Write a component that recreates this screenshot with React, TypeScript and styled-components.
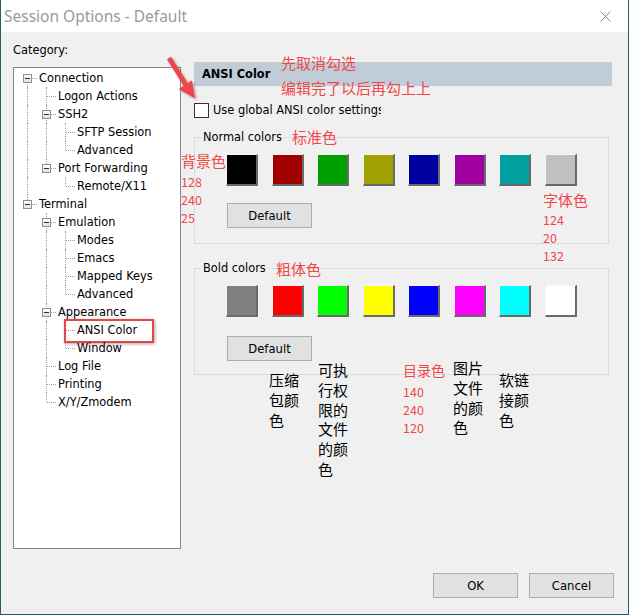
import React from 'react';
import styled, { createGlobalStyle, css } from 'styled-components';

const GlobalStyle = createGlobalStyle`
  html, body { margin: 0; padding: 0; background: #f0f0f0; }
  body { font-family: "DejaVu Sans", "Noto Sans", sans-serif; font-size: 11.4px; color: #000; }
  * { box-sizing: border-box; }
`;

const Window = styled.div`
  position: relative;
  width: 629px;
  height: 615px;
  background: #f0f0f0;
  border: 1px solid #2b5b64;
  border-top: none;
  display: flex;
  flex-direction: column;
  overflow: hidden;
`;

const TitleBar = styled.div`
  height: 32px;
  flex-shrink: 0;
  background: #fff;
  display: flex;
  align-items: center;
  justify-content: space-between;
  padding: 0 17px 0 3px;
`;

const TitleText = styled.span`
  font-family: "Noto Sans", "Open Sans", sans-serif;
  font-size: 15.5px;
  color: #9a9a9a;
`;

const Body = styled.div`
  display: grid;
  grid-template-columns: 168px 418px;
  column-gap: 13px;
  padding: 11px 0 0 12px;
`;

const LeftColumn = styled.div`
  display: flex;
  flex-direction: column;
`;

const CategoryLabel = styled.div`
  height: 14px;
  line-height: 14px;
  margin-bottom: 10px;
`;

const TreeBox = styled.div`
  height: 482px;
  background: #fff;
  border: 1px solid #828790;
  padding: 1px 0 0 4px;
  overflow: hidden;
`;

const TreeRow = styled.div`
  display: flex;
  height: 18px;
  align-items: flex-start;
`;

const Guide = styled.span<{ $line: boolean }>`
  position: relative;
  width: 19px;
  height: 18px;
  flex-shrink: 0;
  ${p => p.$line && css`
    &::before {
      content: '';
      position: absolute;
      left: 9px;
      top: 0;
      bottom: 0;
      border-left: 1px dotted #a0a0a0;
    }
  `}
`;

const Connector = styled.span<{ $top: boolean; $bottom: boolean }>`
  position: relative;
  width: 19px;
  height: 18px;
  flex-shrink: 0;
  &::before {
    content: '';
    position: absolute;
    left: 9px;
    top: ${p => (p.$top ? 0 : 9)}px;
    bottom: ${p => (p.$bottom ? 0 : 9)}px;
    border-left: 1px dotted #a0a0a0;
  }
  &::after {
    content: '';
    position: absolute;
    left: 10px;
    right: 0;
    top: 9px;
    border-top: 1px dotted #a0a0a0;
  }
`;

const ExpandBox = styled.span`
  position: absolute;
  left: 5px;
  top: 5px;
  width: 9px;
  height: 9px;
  z-index: 1;
  border: 1px solid #8e8f8f;
  background: linear-gradient(#ffffff, #dfe3e8);
  &::after {
    content: '';
    position: absolute;
    left: 1px;
    top: 3px;
    width: 5px;
    height: 1px;
    background: #1e2f4d;
  }
`;

const TreeLabel = styled.span<{ $marked?: boolean }>`
  position: relative;
  display: block;
  margin-left: 2px;
  line-height: 18px;
  height: 18px;
  white-space: nowrap;
  ${p => p.$marked && css`
    &::before {
      content: '';
      position: absolute;
      left: -13px;
      top: -2px;
      width: 86px;
      height: 20px;
      border: 2px solid #e64646;
      box-shadow: 1px 1px 3px rgba(0, 0, 0, 0.35);
    }
  `}
`;

const RightColumn = styled.div`
  display: flex;
  flex-direction: column;
`;

const PageHeader = styled.div`
  margin-top: 19px;
  height: 24px;
  line-height: 24px;
  background: #c0cdd9;
  padding-left: 8px;
  font-weight: bold;
`;

const CheckRow = styled.div`
  margin-top: 16px;
  width: 187px;
  height: 16px;
  display: flex;
  align-items: center;
  gap: 4px;
  overflow: hidden;
  white-space: nowrap;
`;

const CheckBox = styled.span`
  width: 15px;
  height: 15px;
  flex-shrink: 0;
  background: #fff;
  border: 1px solid #333;
`;

const GroupBox = styled.div<{ $top: number; $bottom: number }>`
  position: relative;
  width: 415px;
  margin-top: ${p => p.$top}px;
  border: 1px solid #dcdcdc;
  padding: 16px 0 ${p => p.$bottom}px 31px;
`;

const GroupTitle = styled.span`
  position: absolute;
  top: -8px;
  left: 6px;
  padding: 0 2px;
  line-height: 14px;
  background: #f0f0f0;
`;

const SwatchRow = styled.div`
  display: flex;
  gap: 13.5px;
`;

const Swatch = styled.span<{ $color: string }>`
  width: 32px;
  height: 32px;
  flex-shrink: 0;
  background: ${p => p.$color};
  border-style: solid;
  border-width: 1px 2px 2px 1px;
  border-color: #f4f4f4 #6a6a6a #6a6a6a #f4f4f4;
`;

const PushButton = styled.button<{ $gap?: number }>`
  display: block;
  width: 85px;
  height: 25px;
  margin: ${p => p.$gap ?? 0}px 0 0 ${p => (p.$gap ? 1 : 0)}px;
  padding: 0;
  background: #e1e1e1;
  border: 1px solid #adadad;
  font-family: "DejaVu Sans", sans-serif;
  font-size: 11.6px;
  color: #000;
`;

const Footer = styled.div`
  display: flex;
  justify-content: flex-end;
  gap: 11px;
  padding: 24px 14px 16px 0;
`;

const Note = styled.span<{ $x: number; $y: number; $size?: number }>`
  position: absolute;
  left: ${p => p.$x - 1}px;
  top: ${p => p.$y}px;
  font-family: "Noto Sans CJK SC", sans-serif;
  font-size: ${p => p.$size ?? 15}px;
  line-height: ${p => p.$size ?? 15}px;
  color: #f04848;
  white-space: nowrap;
`;

const NoteNumbers = styled.span<{ $x: number; $y: number }>`
  position: absolute;
  left: ${p => p.$x - 1}px;
  top: ${p => p.$y}px;
  font-family: "Noto Sans CJK SC", sans-serif;
  font-size: 12.5px;
  line-height: 18px;
  color: #f04848;
  white-space: pre-line;
`;

const BlackNote = styled.span<{ $x: number; $y: number }>`
  position: absolute;
  left: ${p => p.$x - 1}px;
  top: ${p => p.$y}px;
  font-family: "Noto Sans CJK SC", sans-serif;
  font-size: 15px;
  line-height: 19.8px;
  color: #000;
  white-space: pre-line;
`;

const ArrowSvg = styled.svg`
  position: absolute;
  left: 159px;
  top: 50px;
  overflow: visible;
`;

type Node = { label: string; children?: Node[]; marked?: boolean };

const tree: Node[] = [
  {
    label: 'Connection',
    children: [
      { label: 'Logon Actions' },
      { label: 'SSH2', children: [{ label: 'SFTP Session' }, { label: 'Advanced' }] },
      { label: 'Port Forwarding', children: [{ label: 'Remote/X11' }] },
    ],
  },
  {
    label: 'Terminal',
    children: [
      {
        label: 'Emulation',
        children: [{ label: 'Modes' }, { label: 'Emacs' }, { label: 'Mapped Keys' }, { label: 'Advanced' }],
      },
      { label: 'Appearance', children: [{ label: 'ANSI Color', marked: true }, { label: 'Window' }] },
      { label: 'Log File' },
      { label: 'Printing' },
      { label: 'X/Y/Zmodem' },
    ],
  },
];

type Row = { node: Node; trail: boolean[]; last: boolean; firstRoot: boolean };

function flatten(nodes: Node[], trail: boolean[], out: Row[]) {
  nodes.forEach((node, i) => {
    const last = i === nodes.length - 1;
    out.push({ node, trail, last, firstRoot: trail.length === 0 && i === 0 });
    if (node.children) flatten(node.children, [...trail, last], out);
  });
  return out;
}

const rows = flatten(tree, [], []);

const normalColors = ['#000000', '#a00000', '#00a000', '#a0a000', '#0000a0', '#a000a0', '#00a0a0', '#c0c0c0'];
const boldColors = ['#808080', '#ff0000', '#00ff00', '#ffff00', '#0000ff', '#ff00ff', '#00ffff', '#ffffff'];

function Tree() {
  return (
    <TreeBox>
      {rows.map((r, idx) => (
        <TreeRow key={idx}>
          {r.trail.map((ancLast, k) => (
            <Guide key={k} $line={!ancLast} />
          ))}
          <Connector $top={!r.firstRoot} $bottom={!r.last}>
            {r.node.children && <ExpandBox />}
          </Connector>
          <TreeLabel $marked={r.node.marked}>{r.node.label}</TreeLabel>
        </TreeRow>
      ))}
    </TreeBox>
  );
}

function ColorGroup({ title, colors, top, bottom, gap }: { title: string; colors: string[]; top: number; bottom: number; gap: number }) {
  return (
    <GroupBox $top={top} $bottom={bottom}>
      <GroupTitle>{title}</GroupTitle>
      <SwatchRow>
        {colors.map(c => (
          <Swatch key={c} $color={c} />
        ))}
      </SwatchRow>
      <PushButton $gap={gap}>Default</PushButton>
    </GroupBox>
  );
}

function Arrow() {
  return (
    <ArrowSvg width="40" height="55" viewBox="0 0 40 55">
      <defs>
        <filter id="arrowShadow" x="-50%" y="-50%" width="200%" height="200%">
          <feDropShadow dx="1.5" dy="1.5" stdDeviation="1.2" floodColor="#000" floodOpacity="0.35" />
        </filter>
      </defs>
      <g filter="url(#arrowShadow)" fill="#f04448" stroke="#f04448">
        <line x1="9" y1="8" x2="26" y2="35" strokeWidth="5" />
        <polygon points="34.5,47.5 19.5,39 31.5,31" strokeWidth="1" strokeLinejoin="round" />
      </g>
    </ArrowSvg>
  );
}

export default function App() {
  return (
    <>
      <GlobalStyle />
      <Window>
        <TitleBar>
          <TitleText>Session Options - Default</TitleText>
          <svg width="11" height="11" viewBox="0 0 11 11">
            <path d="M0.5 0.5 L10.5 10.5 M10.5 0.5 L0.5 10.5" stroke="#8a8a8a" strokeWidth="1" />
          </svg>
        </TitleBar>
        <Body>
          <LeftColumn>
            <CategoryLabel>Category:</CategoryLabel>
            <Tree />
          </LeftColumn>
          <RightColumn>
            <PageHeader>ANSI Color</PageHeader>
            <CheckRow>
              <CheckBox />
              <span>Use global ANSI color settings</span>
            </CheckRow>
            <ColorGroup title="Normal colors" colors={normalColors} top={19} bottom={15} gap={17} />
            <ColorGroup title="Bold colors" colors={boldColors} top={24} bottom={13} gap={19} />
          </RightColumn>
        </Body>
        <Footer>
          <PushButton>OK</PushButton>
          <PushButton>Cancel</PushButton>
        </Footer>

        <Arrow />
        <Note $x={281} $y={55}>先取消勾选</Note>
        <Note $x={281} $y={80}>编辑完了以后再勾上上</Note>
        <Note $x={292} $y={129}>标准色</Note>
        <Note $x={181} $y={153}>背景色</Note>
        <NoteNumbers $x={181} $y={173}>{'128\n240\n25'}</NoteNumbers>
        <Note $x={543} $y={192}>字体色</Note>
        <NoteNumbers $x={543} $y={211}>{'124\n20\n132'}</NoteNumbers>
        <Note $x={276} $y={261}>粗体色</Note>
        <Note $x={403} $y={363} $size={14}>目录色</Note>
        <NoteNumbers $x={403} $y={383}>{'140\n240\n120'}</NoteNumbers>
        <BlackNote $x={269} $y={370}>{'压缩\n包颜\n色'}</BlackNote>
        <BlackNote $x={318} $y={360}>{'可执\n行权\n限的\n文件\n的颜\n色'}</BlackNote>
        <BlackNote $x={453} $y={358}>{'图片\n文件\n的颜\n色'}</BlackNote>
        <BlackNote $x={499} $y={370}>{'软链\n接颜\n色'}</BlackNote>
      </Window>
    </>
  );
}
